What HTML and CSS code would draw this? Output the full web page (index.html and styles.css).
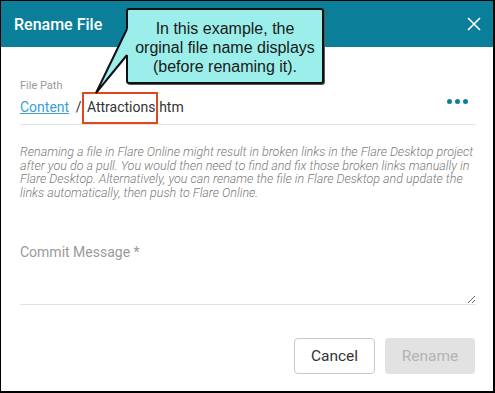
FILE: index.html
```html
<!DOCTYPE html>
<html lang="en">
<head>
  <meta charset="UTF-8">
  <title>Rename File</title>
  <link rel="stylesheet" href="styles.css">
</head>
<body>

  <div class="dialog">
    <header class="dialog-head">
      <h1>Rename File</h1>
      <button class="close" title="Close">
        <svg width="14" height="14" viewBox="0 0 14 14"><path d="M1 1 L13 13 M13 1 L1 13" stroke="#fff" stroke-width="1.6" fill="none"/></svg>
      </button>
    </header>

    <div class="dialog-body">
      <div class="field-label">File Path</div>
      <div class="path-row">
        <div class="path">
          <a href="#">Content</a>
          <span class="sep">/</span>
          <span class="file"><span class="marked">Attractions</span>.htm</span>
        </div>
        <div class="more"><i></i><i></i><i></i></div>
      </div>

      <p class="note">Renaming a file in Flare Online might result in broken links in the Flare Desktop project<br>after you do a pull. You would then need to find and fix those broken links manually in<br>Flare Desktop. Alternatively, you can rename the file in Flare Desktop and update the<br>links automatically, then push to Flare Online.</p>

      <textarea class="commit" placeholder="Commit Message *"></textarea>

      <div class="actions">
        <button class="btn cancel">Cancel</button>
        <button class="btn rename" disabled>Rename</button>
      </div>
    </div>

    <!-- annotation callout -->
    <div class="callout">In this example, the<br>orginal file name displays<br>(before renaming it).</div>
    <svg class="callout-tail" width="40" height="72" viewBox="0 0 40 72">
      <polygon points="40,3 36,4 5,68 36,30 40,31" fill="#9beee9"/>
      <polyline points="36,4 5,68 36,30" fill="none" stroke="#111" stroke-width="2"/>
    </svg>
  </div>

</body>
</html>
```

FILE: styles.css
```css
:root {
  --teal: #0b7f9a;
  --line: #e3e3e3;
}

body {
  margin: 0;
  font-family: Roboto, Arial, sans-serif;
  color: #333;
}

.dialog {
  position: relative;
  width: 495px;
  height: 393px;
  box-sizing: border-box;
  border: solid #000;
  border-width: 1px 2px 2px 1px;
  background: #fff;
}

.dialog-head {
  height: 46px;
  background: var(--teal);
  display: flex;
  align-items: center;
  justify-content: space-between;
  padding: 0 12px 0 13px;
}

.dialog-head h1 {
  margin: 0;
  font-size: 16px;
  font-weight: 500;
  color: #fff;
}

.close {
  background: none;
  border: none;
  padding: 0;
  width: 14px;
  height: 14px;
  display: flex;
  cursor: pointer;
}

.dialog-body {
  padding: 0 17px 0 19px;
}

.field-label {
  margin-top: 32px;
  font-size: 11px;
  line-height: 13px;
  color: #999;
}

.path-row {
  display: flex;
  justify-content: space-between;
  align-items: flex-start;
  margin-top: 5px;
  padding-bottom: 7px;
  border-bottom: 1px solid var(--line);
}

.path {
  font-size: 14px;
  line-height: 20px;
  color: #333;
}

.path a {
  color: #3a9fd6;
}

.sep {
  margin: 0 2px 0 3px;
}

.marked {
  position: relative;
}

.marked::after {
  content: "";
  position: absolute;
  left: -5px;
  right: -3px;
  top: -7px;
  bottom: -9px;
  border: 2px solid #e4461f;
}

.more {
  display: flex;
  gap: 3px;
  margin: 2px 8px 0 0;
}

.more i {
  width: 5px;
  height: 5px;
  border-radius: 50%;
  background: var(--teal);
}

.note {
  margin: 20px 0 0;
  font-size: 12.5px;
  font-weight: 300;
  line-height: 13.5px;
  font-style: italic;
  white-space: nowrap;
  color: #7a7a7a;
}

.commit {
  display: block;
  width: 100%;
  box-sizing: border-box;
  height: 63px;
  margin-top: 43px;
  padding: 0;
  border: none;
  border-bottom: 1px solid var(--line);
  font-family: Roboto, Arial, sans-serif;
  font-size: 14px;
  line-height: 20px;
  outline: none;
}

.commit::placeholder {
  color: #9a9a9a;
}

.actions {
  display: flex;
  justify-content: flex-end;
  gap: 10px;
  margin-top: 33px;
}

.btn {
  height: 36px;
  border-radius: 4px;
  font-family: Roboto, Arial, sans-serif;
  font-size: 15.5px;
}

.cancel {
  width: 81px;
  background: #fff;
  border: 1px solid #c8c8c8;
  color: #333;
}

.rename {
  width: 90px;
  margin-right: 1px;
  background: #e2e2e2;
  border: none;
  color: #b3b3b3;
}

.callout {
  position: absolute;
  left: 125px;
  top: 7px;
  width: 198px;
  height: 76px;
  box-sizing: border-box;
  padding-top: 9px;
  border: 2px solid #111;
  border-radius: 3px;
  box-shadow: 1px 1px 0 #555;
  background: #9beee9;
  font-family: "Liberation Sans", Arial, sans-serif;
  font-size: 16px;
  line-height: 19px;
  text-align: center;
  color: #1a1a1a;
}

.callout-tail {
  position: absolute;
  left: 90px;
  top: 24px;
}
```
